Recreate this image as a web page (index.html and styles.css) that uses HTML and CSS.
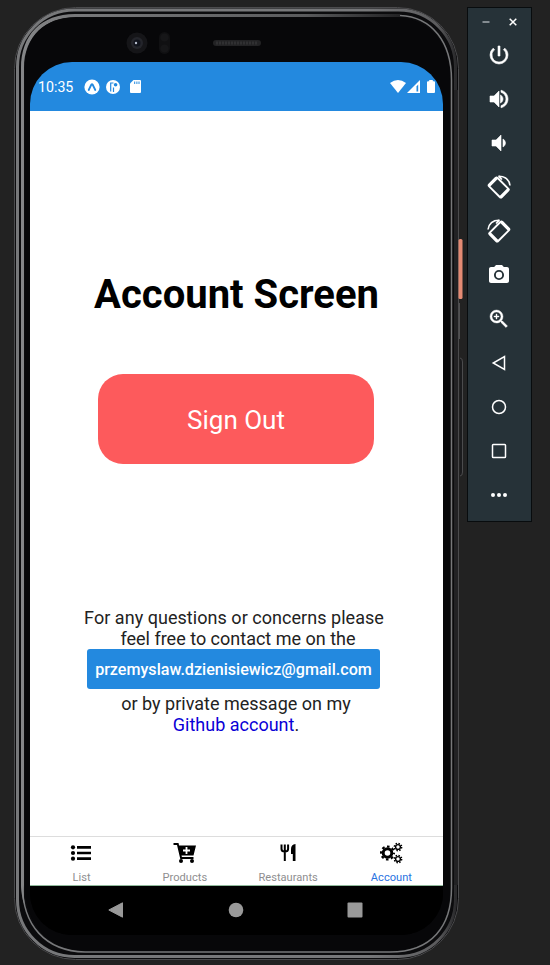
FILE: index.html
```html
<!DOCTYPE html>
<html lang="en">
<head>
<meta charset="utf-8">
<title>Account Screen</title>
<link rel="stylesheet" href="styles.css">
</head>
<body>
<main class="desktop">
  <section class="phone">
    <svg class="bezel" viewBox="0 0 455 965" fill="none">
      <defs>
        <linearGradient id="rim" x1="0" y1="0" x2="1" y2="0">
          <stop offset="0" stop-color="#77787a"/><stop offset=".8" stop-color="#77787a"/><stop offset=".96" stop-color="#5b5b5d"/><stop offset="1" stop-color="#2b2b2d"/>
        </linearGradient>
        <linearGradient id="inner" x1="0" y1="0" x2="1" y2="0">
          <stop offset="0" stop-color="#858688"/><stop offset=".15" stop-color="#77787a"/><stop offset=".75" stop-color="#5a5b5d"/><stop offset="1" stop-color="#222224"/>
        </linearGradient>
      </defs>
      <rect x="4.500" y="7.500" width="444" height="952" rx="61" fill="#0b0b0d" stroke="#4b4b4d"/>
      <rect x="7.500" y="10" width="438" height="946.500" rx="57" stroke="url(#rim)" stroke-width="3"/>
      <path d="M446 90V885" stroke="#222224" stroke-width="4"/>
      <path d="M390 15.500C422 17 441.500 42 441.500 80V888C441.500 926 422 952 380 952H75C35 951 12.500 925 12.500 885" stroke="#77787a" stroke-width="1.500"/>
      <path d="M14.500 905C12 898 11 890 11 885V68C11 35 31 14 65 14H390V17H66C36 17 14 36 14 68V885Q13.500 895 14.500 905Z" fill="url(#inner)"/>
      <path d="M15 66C16 36 34 17.500 65 17.500H388C421 19 440 44 440 80V888C440 925 421 950.500 380 950.500H75C38 950 15 925 15 885Z" fill="#070709"/>
      <circle cx="127" cy="43" r="10.500" fill="#151518"/><circle cx="127" cy="43" r="6" fill="#24252b"/><circle cx="127" cy="43" r="3.500" fill="#10131c"/><circle cx="126" cy="43" r="1.200" fill="#b6bdcc"/>
      <rect x="149" y="32" width="11" height="22" rx="5.500" fill="#101012"/><circle cx="154.500" cy="37.500" r="4" fill="#161618"/><circle cx="154.500" cy="48.500" r="4" fill="#161618"/>
      <rect x="203" y="40" width="48" height="6" rx="3" fill="#222224"/><path d="M206 43H248" stroke="#303032" stroke-width="3" stroke-dasharray="2 1"/>
      <rect x="448.500" y="239" width="4" height="60" rx="1.500" fill="#e58a73"/>
      <path d="M449.500 303V339" stroke="#505052"/>
      <path d="M450 358Q452.500 358 452.500 362V472Q452.500 476 450 476" stroke="#4b4b4d" fill="#1b1b1d"/>
    </svg>
    <div class="screen">
      <header class="status">
        <span class="time">10:35</span>
        <svg class="s-expo" viewBox="0 0 16 16"><circle cx="8" cy="8" r="7.600" fill="#fff"/><path d="M4.700 11 7.400 5.500Q8 4.600 8.600 5.500L11.300 11" fill="none" stroke="#2389df" stroke-width="1.800" stroke-linecap="round"/></svg>
        <svg class="s-round" viewBox="0 0 14 14"><circle cx="7" cy="7" r="7" fill="#fff"/><path d="M4.700 2.500V11.500M4.700 3H7.500M7.500 7.500V12" stroke="#2389df" stroke-width="1.200"/><circle cx="9.600" cy="4.700" r="1.800" fill="#2389df"/></svg>
        <svg class="s-card" viewBox="0 0 11 13"><path d="M3.500 0H10Q11 0 11 1V12Q11 13 10 13H1Q0 13 0 12V3.500Z" fill="#fff"/><path d="M4.700 1.500V4M6.900 1.500V4M9 1.500V4" stroke="#2389df"/></svg>
        <span class="spacer"></span>
        <svg class="s-wifi" viewBox="0 0 16 13"><path d="M0 3Q8-3 16 3L8 13Z" fill="#fff"/></svg>
        <svg class="s-cell" viewBox="0 0 13 13"><path d="M13 0V13H0Z" fill="#fff"/><path d="M11.200 4.500V11.500H9.500V6.500Z" fill="#2389df"/></svg>
        <svg class="s-batt" viewBox="0 0 8 13"><path d="M2.200 0H5.800V1.300H7Q8 1.300 8 2.300V12Q8 13 7 13H1Q0 13 0 12V2.300Q0 1.300 1 1.300H2.200Z" fill="#fff"/></svg>
      </header>
      <div class="content">
        <h1>Account Screen</h1>
        <button class="signout">Sign Out</button>
        <div class="contact">
          <p class="first">For any questions or concerns please</p>
          <p class="second">feel free to contact me on the</p>
          <a class="email">przemyslaw.dzienisiewicz@gmail.com</a>
          <p>or by private message on my</p>
          <p><a class="link">Github account</a>.</p>
        </div>
      </div>
      <nav class="tabs">
        <div class="tab">
          <svg viewBox="0 0 24 24"><path d="M8 6.300H22M8 12H22M8 17.700H22" stroke="#000" stroke-width="2.700"/><g><circle cx="4" cy="6.300" r="2.100"/><circle cx="4" cy="12" r="2.100"/><circle cx="4" cy="17.700" r="2.100"/></g></svg>
          <span>List</span>
        </div>
        <div class="tab">
          <svg viewBox="-1 0 24 24"><path d="M.5 2H5.500L6.100 4.500H23L20.500 14.500H8.500L8.900 16H20.500V18H7.300L4 4H.5Z"/><circle cx="8" cy="20" r="2"/><circle cx="19" cy="20" r="2"/><path d="M13.500 6V13M10 9.500H17" stroke="#fff" stroke-width="1.800"/></svg>
          <span>Products</span>
        </div>
        <div class="tab">
          <svg viewBox="-.5 0 24 24"><path d="M5 3.500V8Q5 10.500 8.300 10.500T11.600 8V3.500M8.300 3.500V20" fill="none" stroke="#000" stroke-width="2"/><path d="M19 3V20H16.300V13H14.500V8Q14.500 3.500 19 3Z"/></svg>
          <span>Restaurants</span>
        </div>
        <div class="tab active">
          <svg viewBox="0 0 24 24" fill="none" stroke="#000"><circle cx="8.500" cy="12" r="4.300" stroke-width="3"/><circle cx="8.500" cy="12" r="6.500" stroke-width="2" stroke-dasharray="2.600 2.505" stroke-dashoffset="1.300"/><g><circle cx="19" cy="6" r="2.400" stroke-width="1.400"/><circle cx="19" cy="6" r="3.700" stroke-width="1.400" stroke-dasharray="1.500 1.406"/></g><g><circle cx="19" cy="18" r="2.400" stroke-width="1.400"/><circle cx="19" cy="18" r="3.700" stroke-width="1.400" stroke-dasharray="1.500 1.406"/></g></svg>
          <span>Account</span>
        </div>
      </nav>
      <footer class="softkeys">
        <svg viewBox="0 0 16 16"><path d="M14.500.8V15.200L.8 8Z" stroke="#999" stroke-linejoin="round"/></svg>
        <svg viewBox="0 0 16 16"><circle cx="8" cy="8" r="7.300"/></svg>
        <svg viewBox="0 0 16 16"><rect x=".5" y=".5" width="15" height="15" rx="1"/></svg>
      </footer>
    </div>
  </section>
  <aside class="toolbar">
    <div class="window">
      <svg viewBox="0 0 10 10"><path d="M1.500 5H8.500" stroke="#b8bfc3" stroke-width="1.300"/></svg>
      <svg viewBox="0 0 10 10"><path d="M1.700 1.700 8.300 8.300M8.300 1.700 1.700 8.300" stroke="#fff" stroke-width="1.500"/></svg>
    </div>
    <svg viewBox="0 0 24 24"><path d="M13 3h-2v10h2V3zm4.830 2.170-1.420 1.420A6.920 6.920 0 0 1 19 12c0 3.870-3.130 7-7 7A6.995 6.995 0 0 1 7.580 6.580L6.170 5.170A8.932 8.932 0 0 0 3 12a9 9 0 0 0 18 0c0-2.740-1.230-5.180-3.170-6.830z" stroke="#fff" stroke-width=".6"/></svg>
    <svg viewBox="0 0 24 24"><path d="M3 9v6h4l5 5V4L7 9H3zm10.500-1.030v8.050c1.480-.730 2.500-2.250 2.500-4.020s-1.020-3.290-2.500-4.030zM14 3.230v2.060c2.890.860 5 3.540 5 6.710s-2.110 5.850-5 6.710v2.060c4.010-.910 7-4.490 7-8.770s-2.990-7.860-7-8.770z" stroke="#fff" stroke-width=".6"/></svg>
    <svg viewBox="0 0 24 24"><path d="M5 9v6h4l5 5V4L9 9H5zm13.500 3A4.500 4.500 0 0 0 16 7.970v8.050A4.480 4.480 0 0 0 18.500 12z" stroke="#fff" stroke-width=".6"/></svg>
    <svg viewBox="-12 -12 24 24" fill="none" stroke="#fff"><g transform="translate(-.3 .5) rotate(45)"><rect x="-9" y="-6" width="18" height="12" rx="1.500" stroke-width="1.900"/><path d="M-8 -6V6M8 -6V6" stroke-width="2.700"/></g><path d="M-.5 -10.800Q9.500 -11 11 -1.500M-.5 -10.800 3 -7.500" stroke-width="1.600"/></svg>
    <svg viewBox="-12 -12 24 24" fill="none" stroke="#fff"><g transform="scale(-1 1) translate(-.3 .5) rotate(45)"><rect x="-9" y="-6" width="18" height="12" rx="1.500" stroke-width="1.900"/><path d="M-8 -6V6M8 -6V6" stroke-width="2.700"/></g><path d="M.5 -10.800Q-9.500 -11 -11 -1.500M.5 -10.800 -3 -7.500" stroke-width="1.600"/></svg>
    <svg viewBox="0 0 24 24"><path d="M9 2 7.170 4H4c-1.100 0-2 .900-2 2v12c0 1.100.900 2 2 2h16c1.100 0 2-.900 2-2V6c0-1.100-.900-2-2-2h-3.170L15 2H9z"/><circle cx="12" cy="12" r="4.100" fill="#fff" stroke="#263238" stroke-width="1.900"/></svg>
    <svg viewBox="0 0 24 24"><path d="M15.500 14h-.790l-.280-.270A6.471 6.471 0 0 0 16 9.500 6.500 6.500 0 1 0 9.500 16c1.610 0 3.090-.590 4.230-1.570l.270.280v.790l5 4.990L20.490 19l-4.990-5zm-6 0C7.010 14 5 11.990 5 9.500S7.010 5 9.500 5 14 7.010 14 9.500 11.990 14 9.500 14zM10 7H9v2H7v1h2v2h1v-2h2V9h-2z" stroke="#fff" stroke-width=".4"/></svg>
    <svg viewBox="0 0 24 24" fill="none" stroke="#fff" stroke-width="1.500"><path d="M17.500 5.500V18.500L6.200 12Z"/></svg>
    <svg viewBox="0 0 24 24" fill="none" stroke="#fff" stroke-width="1.500"><circle cx="12" cy="12" r="6.500"/></svg>
    <svg viewBox="0 0 24 24" fill="none" stroke="#fff" stroke-width="1.500"><rect x="5.500" y="5.500" width="13" height="13" rx=".8"/></svg>
    <svg viewBox="0 0 24 24"><circle cx="6" cy="12" r="2"/><circle cx="12" cy="12" r="2"/><circle cx="18" cy="12" r="2"/></svg>
  </aside>
</main>
</body>
</html>
```
FILE: styles.css
```css
* { box-sizing: border-box; margin: 0; padding: 0; }
body { background: #222; font-family: Roboto, "Liberation Sans", sans-serif; overflow: hidden; }
svg { display: block; flex: none; }
.desktop { display: flex; width: 550px; height: 965px; padding-left: 10px; }
.phone { display: grid; width: 455px; height: 965px; flex: none; }
.bezel { grid-area: 1 / 1; width: 455px; height: 965px; }
.screen { grid-area: 1 / 1; width: 413px; height: 873px; margin: 62px 0 0 20px; border-radius: 42px; overflow: hidden; background: #000; display: flex; flex-direction: column; }
.status { height: 49px; flex: none; background: #2389df; color: #fff; display: flex; align-items: center; padding: 0 8px; }
.time { font-size: 14.200px; width: 46px; padding-top: 1px; }
.s-expo { width: 16px; height: 16px; margin-right: 6px; }
.s-round { width: 14px; height: 14px; margin-right: 10px; }
.s-card { width: 11px; height: 13px; }
.spacer { flex: 1; }
.s-wifi { width: 16px; height: 13px; }
.s-cell { width: 13px; height: 13px; margin: 0 7px 0 1px; }
.s-batt { width: 8px; height: 13px; }
.content { flex: 1; background: #fff; display: flex; flex-direction: column; align-items: center; padding: 159px 1px 0 0; }
h1 { font-size: 40px; line-height: 50px; height: 50px; font-weight: 700; color: #000; white-space: nowrap; margin-left: 1px; }
.signout { width: 276px; height: 90px; margin: 54px 1px 0 0; border: 0; border-radius: 25px; background: #fd5a5c; color: #fff; font: 400 26px Roboto, sans-serif; padding: 2px 0 0 1px; }
.contact { margin-top: 143px; display: flex; flex-direction: column; align-items: center; font-size: 18px; line-height: 21px; color: #222; white-space: nowrap; }
.contact .first { margin-left: -4px; letter-spacing: .04px; }
.contact .second { margin-left: 4px; }
.email { width: 293px; height: 40px; margin: 0 0 4px -5px; border-radius: 3px; background: #2389df; color: #fff; font-size: 16.100px; font-weight: 500; line-height: 41px; text-align: center; }
.link { color: #0a00d6; }
.tabs { height: 50px; flex: none; background: #fff; border-top: 1px solid #ddd; border-bottom: 1px solid #8fb99b; display: grid; grid-template-columns: repeat(4, 1fr); }
.tab { display: flex; flex-direction: column; align-items: center; padding-top: 4px; font-size: 11.100px; line-height: 14px; color: #8e8e8f; }
.tab svg { width: 24px; height: 24px; margin-right: 1px; }
.tab span { margin-top: 6px; }
.active { color: #2872df; }
.softkeys { height: 49px; flex: none; background: #000; display: flex; justify-content: space-between; padding: 16px 80px 0 78px; }
.softkeys svg { width: 16px; height: 16px; fill: #999; }
.toolbar { width: 65px; height: 515px; margin: 7px 0 0 2px; border: 1px solid #080c0e; background: #263238; display: flex; flex-direction: column; align-items: center; gap: 20px; padding-right: 1px; }
.toolbar svg { width: 24px; height: 24px; fill: #fff; }
.toolbar svg[fill="none"] { fill: none; }
.window { display: flex; gap: 17px; height: 15px; padding-top: 9px; }
.toolbar .window svg { width: 10px; height: 10px; }
```
